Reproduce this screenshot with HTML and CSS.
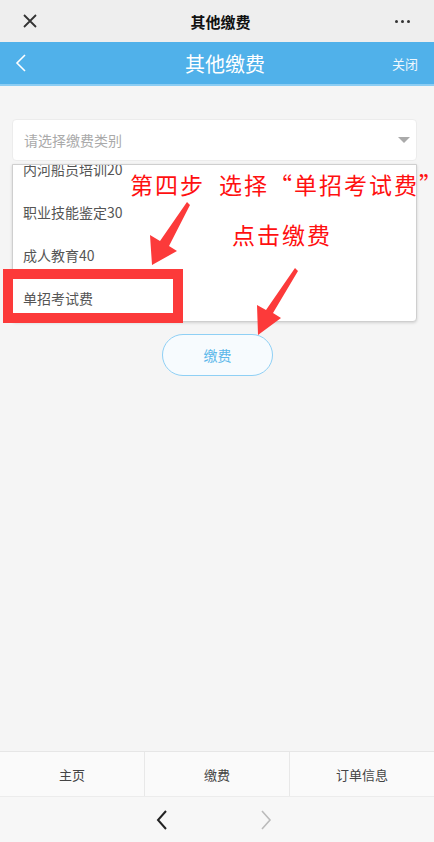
FILE: index.html
```html
<!DOCTYPE html>
<html lang="zh-CN">
<head>
    <meta charset="UTF-8">
    <meta name="viewport" content="width=device-width, initial-scale=1.0">
    <title>其他缴费</title>
    <link rel="stylesheet" href="styles.css">
</head>
<body>

<div class="page">
    <div class="topbar">
        <svg class="close-x" width="16" height="16" viewBox="0 0 16 16">
            <path d="M2 2 L14 14 M14 2 L2 14" stroke="#333" stroke-width="1.8" fill="none"/>
        </svg>
        <div class="topbar-title">其他缴费</div>
        <div class="dots"><span></span><span></span><span></span></div>
    </div>

    <div class="navbar">
        <svg class="nav-back" width="14" height="20" viewBox="0 0 14 20">
            <path d="M11 2 L3 10 L11 18" stroke="#fff" stroke-width="1.6" fill="none"/>
        </svg>
        <div class="navbar-title">其他缴费</div>
        <div class="navbar-close">关闭</div>
    </div>

    <div class="main">
        <div class="select">
            <span class="placeholder">请选择缴费类别</span>
            <span class="caret"></span>
        </div>

        <div class="dropdown">
            <ul class="options">
                <li>内河船员培训20</li>
                <li>职业技能鉴定30</li>
                <li>成人教育40</li>
                <li>单招考试费</li>
            </ul>
        </div>

        <button class="pay-btn">缴费</button>
    </div>

    <div class="tabbar">
        <div class="tab">主页</div>
        <div class="tab">缴费</div>
        <div class="tab">订单信息</div>
    </div>

    <div class="browser-nav">
        <svg width="14" height="22" viewBox="0 0 14 22">
            <path d="M11 2 L3 11 L11 20" stroke="#222" stroke-width="2" fill="none"/>
        </svg>
        <svg width="14" height="22" viewBox="0 0 14 22">
            <path d="M3 2 L11 11 L3 20" stroke="#bbb" stroke-width="1.6" fill="none"/>
        </svg>
    </div>
</div>

<!-- annotations drawn over the screenshot -->
<div class="mark-box"></div>
<div class="note note-step">第四步<span class="note-gap">选择“单招考试费”</span></div>
<div class="note note-click">点击缴费</div>
<svg class="arrows" width="434" height="842" viewBox="0 0 434 842">
    <polygon points="187,202 190,205 169,246 177,251 152,265 150,235 160,241" fill="#fc3a3a"/>
    <polygon points="295,268 298,271 273,313 281,318 258,335 257,305 266,310" fill="#fc3a3a"/>
</svg>

</body>
</html>
```

FILE: styles.css
```css
body {
    margin: 0;
    font-family: "Noto Sans CJK SC", "Noto Sans", sans-serif;
    position: relative;
    background: #f5f5f5;
}
.page {
    height: 842px;
    display: flex;
    flex-direction: column;
}
.topbar {
    height: 42px;
    flex-shrink: 0;
    background: #eeeeee;
    display: flex;
    align-items: center;
    justify-content: space-between;
    padding: 0 24px 0 22px;
}
.topbar-title {
    font-size: 15px;
    font-weight: bold;
    color: #111;
    margin-left: 8px;
}
.dots {
    display: flex;
    gap: 3px;
}
.dots span {
    width: 3px;
    height: 3px;
    border-radius: 50%;
    background: #333;
}
.navbar {
    height: 42px;
    flex-shrink: 0;
    background: #50b1ea;
    border-bottom: 2px solid #8ccdf3;
    display: flex;
    align-items: center;
    justify-content: space-between;
    padding: 0 16px 0 14px;
}
.navbar-title {
    font-size: 20px;
    color: #fff;
    margin-left: 30px;
}
.navbar-close {
    font-size: 13px;
    color: #eef8fe;
}
.main {
    flex: 1;
    padding: 33px 17px 0 12px;
    display: flex;
    flex-direction: column;
}
.select {
    height: 40px;
    background: #fff;
    border: 1px solid #ececec;
    border-radius: 4px;
    display: flex;
    align-items: center;
    justify-content: space-between;
    padding: 0 6px 0 11px;
}
.placeholder {
    font-size: 14px;
    color: #aaa;
}
.caret {
    width: 0;
    height: 0;
    border-left: 6px solid transparent;
    border-right: 6px solid transparent;
    border-top: 6px solid #aaa;
}
.dropdown {
    margin-top: 3px;
    height: 156px;
    background: #fff;
    border: 1px solid #cfcfcf;
    border-radius: 0 0 4px 4px;
    box-shadow: 0 1px 3px rgba(0, 0, 0, 0.15);
    overflow: hidden;
}
.options {
    list-style: none;
    margin: -17px 0 0;
    padding: 0;
}
.options li {
    height: 43px;
    line-height: 43px;
    padding-left: 10px;
    font-size: 14px;
    color: #555;
}
.pay-btn {
    margin: 12px auto 0;
    width: 111px;
    height: 42px;
    border: 1.5px solid #8fd0f5;
    border-radius: 21px;
    background: #f7fbfe;
    color: #5cb8ea;
    font-family: inherit;
    font-size: 14px;
    position: relative;
    left: 3px;
}
.tabbar {
    height: 44px;
    flex-shrink: 0;
    background: #fafafa;
    border-top: 1px solid #e6e6e6;
    display: flex;
}
.tab {
    flex: 1;
    display: flex;
    align-items: center;
    justify-content: center;
    font-size: 13px;
    color: #444;
    border-right: 1px solid #e8e8e8;
}
.tab:last-child {
    border-right: none;
}
.browser-nav {
    height: 45px;
    flex-shrink: 0;
    background: #f7f7f7;
    border-top: 1px solid #ececec;
    display: flex;
    align-items: center;
    justify-content: center;
    gap: 90px;
    padding-right: 6px;
}

/* annotation overlay */
.mark-box {
    position: absolute;
    left: 3px;
    top: 269px;
    width: 160px;
    height: 34px;
    border: 10px solid #fc3a3a;
}
.note {
    position: absolute;
    color: #ff1010;
    font-size: 23px;
    line-height: 24px;
    letter-spacing: 2px;
    white-space: nowrap;
}
.note-step {
    left: 130px;
    top: 172px;
}
.note-gap {
    margin-left: 14px;
}
.note-click {
    left: 232px;
    top: 222px;
}
.arrows {
    position: absolute;
    left: 0;
    top: 0;
    pointer-events: none;
}
```
